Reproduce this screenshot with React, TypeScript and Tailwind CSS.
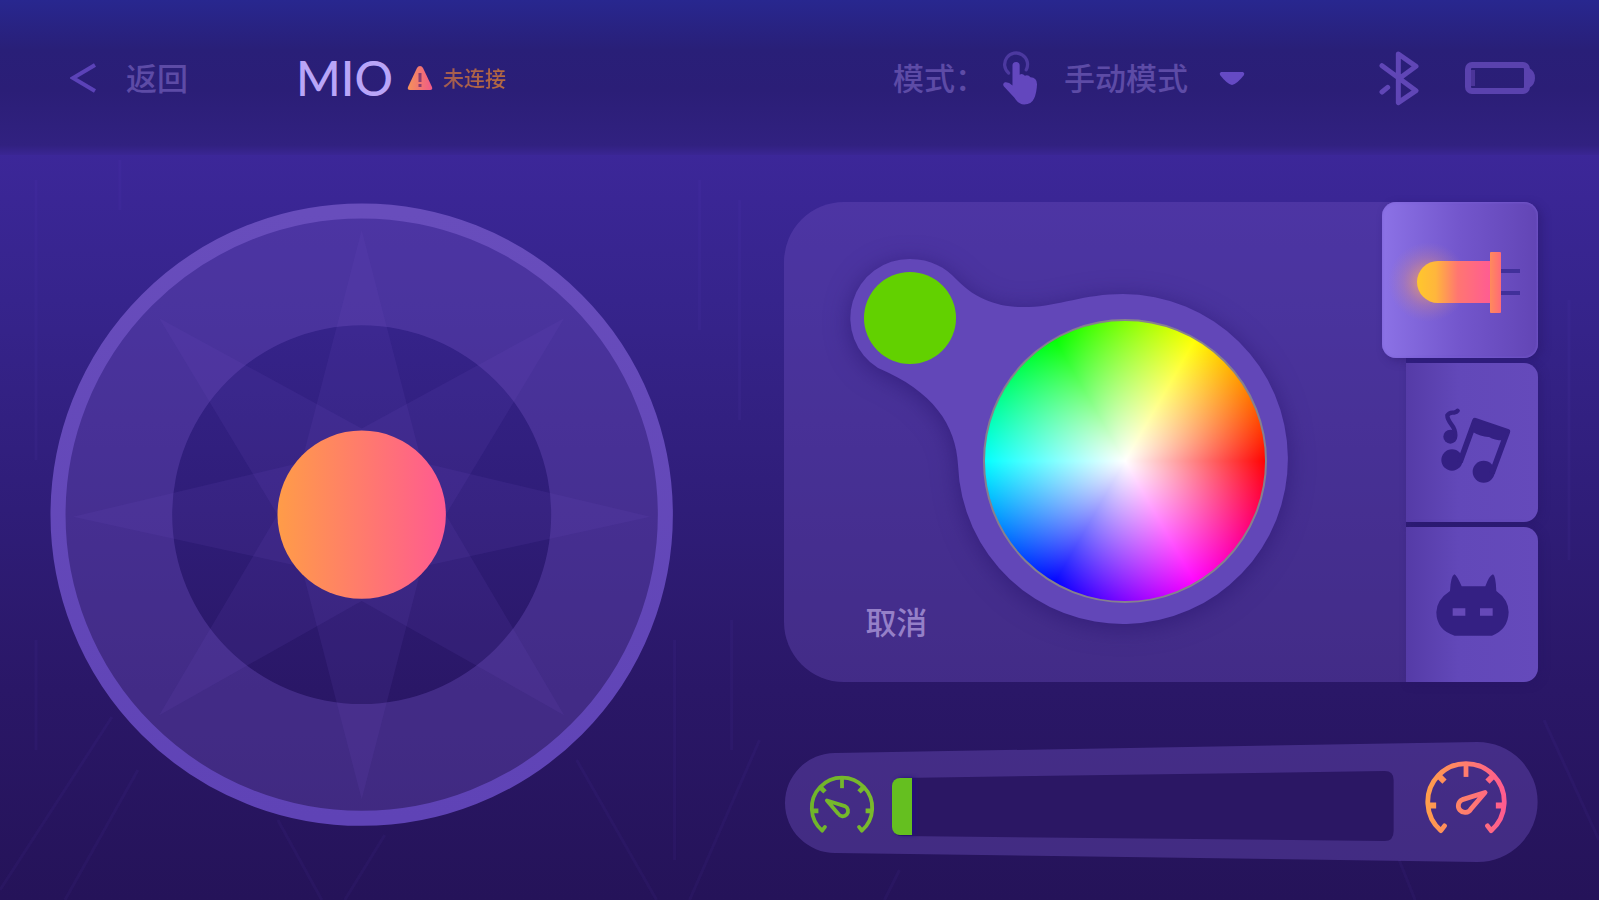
import React, { useState } from 'react';
import clsx from 'clsx';

type TabId = 'light' | 'music' | 'face';

const Backdrop = () => (
    <svg
        className="absolute inset-0 -z-10 w-full h-full"
        viewBox="0 0 1600 900"
        preserveAspectRatio="none"
        fill="none"
        stroke="#7a5ad6"
        strokeOpacity="0.06"
        strokeWidth="3"
        aria-hidden="true"
    >
        <path d="M112 717L0 890M138 770L65 900M278 820L322 900M577 760L657 900M385 835L345 900M760 740L690 900" />
        <path d="M675 640V860M732 620V750M36 640V750M1545 720L1600 840M1400 860L1416 900M900 870L885 900" />
        <path d="M36 180V460M120 160V210M740 200V420M700 180V330M1570 300V560" />
    </svg>
);

const HandIcon = () => (
    <svg className="w-[36px] h-[56px]" viewBox="400 52 110 170" aria-hidden="true">
        <path d="M420 122A35 35 0 1 1 474 112" fill="none" stroke="#4c39a0" strokeWidth="10" strokeLinecap="round" />
        <path
            d="M432 99a11 11 0 0 1 22 0V127Q462 122 470 130Q480 126 487 135Q507 136 507 156Q506 182 498 200Q490 218 468 218Q450 217 438 197L406 163Q400 154 409 150Q420 148 432 160Z"
            fill="#6347be"
        />
    </svg>
);

const BluetoothIcon = () => (
    <svg
        className="w-[40px] h-[56px]"
        viewBox="92 56 120 168"
        fill="none"
        stroke="#6046b6"
        strokeWidth="15"
        strokeLinecap="round"
        strokeLinejoin="round"
        aria-hidden="true"
    >
        <path d="M101 103L203 178L150 214V68L203 105L152 142" />
        <path d="M101 182L118 168" />
    </svg>
);

const BatteryIcon = () => (
    <svg className="w-[70px] h-[32px]" viewBox="0 0 70 32" fill="none" aria-hidden="true">
        <rect x="3" y="3" width="59" height="26" rx="4" stroke="#5a42ae" strokeWidth="6" />
        <path d="M64 6Q70 9 70 16T64 26Z" fill="#5a42ae" />
        <path d="M8 8V24" stroke="#4b3599" strokeWidth="4" />
    </svg>
);

const LedIcon = () => (
    <svg className="w-[156px] h-[156px]" viewBox="0 0 156 156" aria-hidden="true">
        <defs>
            <linearGradient id="ledBody" x1="0" x2="1">
                <stop offset="0" stopColor="#ffc72c" />
                <stop offset="0.25" stopColor="#ffb63c" />
                <stop offset="0.55" stopColor="#ff7671" />
                <stop offset="1" stopColor="#ff5b93" />
            </linearGradient>
            <linearGradient id="ledRim" x1="0" x2="1">
                <stop offset="0" stopColor="#ff8a5c" />
                <stop offset="1" stopColor="#ff6a78" />
            </linearGradient>
            <radialGradient id="ledGlow">
                <stop offset="0.2" stopColor="#f5a060" stopOpacity="0.7" />
                <stop offset="0.6" stopColor="#d98c80" stopOpacity="0.3" />
                <stop offset="1" stopColor="#b080a0" stopOpacity="0" />
            </radialGradient>
        </defs>
        <circle cx="46" cy="80" r="40" fill="url(#ledGlow)" />
        <path d="M119 69H138M119 91H138" stroke="#41309a" strokeWidth="4" />
        <path d="M109 59H56A21 21 0 0 0 56 101H109Z" fill="url(#ledBody)" />
        <rect x="108" y="50" width="11" height="61" rx="1" fill="url(#ledRim)" />
    </svg>
);

const MusicIcon = () => (
    <svg className="w-[72px] h-[78px]" viewBox="240 170 216 234" fill="#342083" stroke="#342083" aria-hidden="true">
        <circle cx="276" cy="332" r="32" stroke="none" />
        <circle cx="371" cy="367" r="33" stroke="none" />
        <path d="M300 338L345 214L442 247L396 372" fill="none" strokeWidth="17" strokeLinejoin="round" />
        <path d="M345 212L444 246L433 273Q405 274 387 263Q365 264 334 246Z" stroke="none" />
        <circle cx="271" cy="262" r="21" stroke="none" />
        <path d="M286 258Q286 240 274 225Q262 210 262 198Q268 188 282 190Q290 188 293 184" fill="none" strokeWidth="13" strokeLinecap="round" />
    </svg>
);

const CatIcon = () => (
    <svg className="w-[75px] h-[64px]" viewBox="225 670 225 192" aria-hidden="true">
        <path
            d="M283 674Q290 676 305 710H376Q388 677 399 674Q407 678 409 724Q446 750 446 788Q444 840 396 858H284Q230 842 229 788Q230 750 270 724Q272 680 283 674Z"
            fill="#342083"
        />
        <path d="M278 776H316V798H278ZM360 776H398V798H360Z" fill="#6649b8" />
    </svg>
);

interface GaugeIconProps {
    id: string;
    className: string;
    from: string;
    to: string;
    slow?: boolean;
}

const GaugeIcon: React.FC<GaugeIconProps> = ({ id, className, from, to, slow }) => (
    <svg className={className} viewBox="0 0 72 72" fill="none" aria-hidden="true">
        <defs>
            <linearGradient id={id} gradientUnits="userSpaceOnUse" x1="2" y1="0" x2="70" y2="0">
                <stop offset="0" stopColor={from} />
                <stop offset="1" stopColor={to} />
            </linearGradient>
        </defs>
        <g stroke={`url(#${id})`} strokeWidth="4" strokeLinejoin="round">
            <path d="M18 56L15 60A32 32 0 1 1 57 60L54 56" strokeLinecap="round" />
            <path d="M36 5V15" />
            <path d="M13 14L18 19M59 14L54 19M5 39H11M67 39H61" strokeWidth="5" />
            <path
                d="M52 28L33 34A5.6 5.6 0 1 0 40 42Z"
                transform={slow ? 'matrix(-1 0 0 1 72 0)' : undefined}
            />
        </g>
    </svg>
);

const Joystick = () => (
    <svg className="w-[42%] shrink-0" viewBox="-312 -312 624 624" role="img" aria-label="MIO">
        <defs>
            <linearGradient id="rim" x1="0" x2="0" y1="0" y2="1">
                <stop offset="0" stopColor="#684dbc" />
                <stop offset="1" stopColor="#5f43b6" />
            </linearGradient>
            <linearGradient id="knob" x1="0" x2="1">
                <stop offset="0" stopColor="#ff9c48" />
                <stop offset="1" stopColor="#ff5a91" />
            </linearGradient>
        </defs>
        <path
            fillRule="evenodd"
            d="M0-304A304 304 0 1 1 0 304A304 304 0 1 1 0-304ZM0-189A189 189 0 1 0 0 189A189 189 0 1 0 0-189Z"
            fill="#6e50be"
            fillOpacity="0.36"
        />
        <circle r="303" fill="none" stroke="url(#rim)" strokeWidth="15" />
        <g fill="#7452c8" fillOpacity="0.12">
            <path d="M0-284L60-52L288 2L60 52L0 284L-60 52L-288 2L-60-52Z" />
            <path d="M-202-196L0-86L202-196L84 0L202 200L0 86L-202 200L-84 0Z" />
        </g>
        <circle r="84" fill="url(#knob)" />
    </svg>
);

const ColorPicker = () => (
    <div className="relative w-[440px] h-[370px]">
        <svg className="absolute inset-0 w-full h-full overflow-visible drop-shadow-[0_4px_12px_rgba(40,20,110,0.6)]" viewBox="852 259 440 370" aria-hidden="true">
            <path
                d="M911 259C932 259 947 268 957 279C979 302 1004 308 1030 307C1060 306 1085 294 1124 294A165 165 0 1 1 959 465C957 425 934 391 879 368A59 59 0 0 1 911 259Z"
                fill="#6247b8"
            />
        </svg>
        <span className="absolute left-[13px] top-[13px] w-[92px] h-[92px] rounded-full bg-[#62d100]" />
        <button
            aria-label="颜色"
            className="absolute left-[132px] top-[60px] w-[284px] h-[284px] rounded-full border-2 border-[#86808f] bg-[radial-gradient(circle_closest-side,#fff,transparent),conic-gradient(from_90deg,#f00,#f0f,#00f,#0ff,#0f0,#ff0,#f00)] bg-origin-border"
        />
    </div>
);

const tabs: { id: TabId; label: string; icon: React.ReactNode }[] = [
    { id: 'light', label: '灯光', icon: <LedIcon /> },
    { id: 'music', label: '音乐', icon: <MusicIcon /> },
    { id: 'face', label: '表情', icon: <CatIcon /> },
];

const SpeedBar = () => {
    const [speed, setSpeed] = useState(4);

    return (
        <div className="relative flex items-center h-[120px] pl-[24px] pr-[29px]">
            <svg className="absolute inset-0 w-full h-full" viewBox="0 0 753 120" preserveAspectRatio="none" aria-hidden="true">
                <path d="M51 11L693 0A60 60 0 0 1 693 120L51 111A50 50 0 0 1 51 11Z" fill="#6e50be" fillOpacity="0.4" />
            </svg>
            <GaugeIcon id="gaugeSlow" className="relative w-[68px] h-[68px] shrink-0 mt-3" from="#6fb52a" to="#7aba2c" slow />
            <div className="relative flex-1 h-[72px] ml-4 mt-2">
                <svg className="w-full h-full" viewBox="0 0 503 72" preserveAspectRatio="none" aria-hidden="true">
                    <path d="M10 8L493 1Q502 1 502 10V61Q502 71 493 71L10 66Q1 66 1 56V18Q1 8 10 8Z" fill="#2b1764" />
                </svg>
                <span
                    className="absolute left-0 top-[8px] h-[57px] rounded-l-lg bg-[#65bf20] shadow-[3px_0_4px_#23107a]"
                    style={{ width: `${speed}%` }}
                />
                <input
                    type="range"
                    aria-label="速度"
                    min={4}
                    max={100}
                    value={speed}
                    onChange={e => setSpeed(Number(e.target.value))}
                    className="absolute inset-0 w-full h-full opacity-0 cursor-pointer"
                />
            </div>
            <GaugeIcon id="gaugeFast" className="relative w-[86px] h-[86px] shrink-0 ml-[28px]" from="#ff9f4a" to="#ff5a91" />
        </div>
    );
};

export default function App() {
    const [tab, setTab] = useState<TabId>('light');

    return (
        <div className="relative isolate min-h-screen flex flex-col overflow-hidden bg-[linear-gradient(to_bottom,#3c2799_150px,#36248c_300px,#2f1d78_510px,#2a1767_690px,#251359_900px)] font-['Lato','Noto_Sans_CJK_SC',sans-serif]">
            <Backdrop />
            <header className="flex items-center justify-between h-[155px] pl-[70px] pr-[64px] bg-[linear-gradient(to_bottom,#28278f_0px,#291f78_50px,#2b1e77_90px,#312180_145px,#3a2693_155px)]">
                <div className="flex items-center">
                    <button className="flex items-center gap-[30px] text-[31px] leading-10 font-medium text-[#5d4ba6]">
                        <svg className="w-[26px] h-[30px]" viewBox="0 0 26 30" fill="none" stroke="#5b42b8" strokeWidth="4" aria-hidden="true">
                            <path d="M25 2L3 15L25 28" />
                        </svg>
                        返回
                    </button>
                    <h1 className="ml-[108px] text-[48px] leading-[56px] font-medium text-[#b9a5f8]">MIO</h1>
                    <div className="flex items-center gap-[10px] ml-[14px] text-[21px] leading-8 font-medium">
                        <svg className="w-[26px] h-[25px]" viewBox="0 0 26 25" aria-hidden="true">
                            <defs>
                                <linearGradient id="warn" x1="0" x2="1">
                                    <stop offset="0" stopColor="#f5925a" />
                                    <stop offset="1" stopColor="#f05a88" />
                                </linearGradient>
                            </defs>
                            <path d="M13 1Q15 1 16 3L25 22Q26 25 23 25H3Q0 25 1 22L10 3Q11 1 13 1Z" fill="url(#warn)" />
                            <path d="M13 8V17M13 19V22" stroke="#8d3d70" strokeWidth="3" />
                        </svg>
                        <span className="bg-linear-to-r from-[#a35c50] to-[#b5693f] bg-clip-text text-transparent">未连接</span>
                    </div>
                </div>

                <div className="flex items-center text-[31px] leading-10 font-medium text-[#5d4ba6]">
                    <label htmlFor="mode">模式：</label>
                    <span className="ml-4">
                        <HandIcon />
                    </span>
                    <div className="relative ml-[26px]">
                        <select id="mode" className="w-[181px] appearance-none bg-transparent leading-10">
                            <option>手动模式</option>
                        </select>
                        <svg className="absolute right-0 top-[14px] w-[26px] h-[13px] pointer-events-none" viewBox="0 0 26 13" aria-hidden="true">
                            <path d="M2 0H24Q26 1 25 3Q18 12 13 13Q8 12 1 3Q0 1 2 0Z" fill="#654ac4" />
                        </svg>
                    </div>
                    <span className="ml-[134px]">
                        <BluetoothIcon />
                    </span>
                    <span className="ml-[46px]">
                        <BatteryIcon />
                    </span>
                </div>
            </header>

            <main className="flex flex-1 items-start gap-[110px] pt-[47px] pl-[49px] pr-[61px] pb-8">
                <Joystick />
                <div className="flex flex-col flex-1 gap-[60px]">
                    <div className="flex h-[480px]">
                        <section className="relative flex-1 rounded-l-[60px] bg-[#6e50be]/36 pl-[67px] pt-[57px]">
                            <ColorPicker />
                            <button className="absolute left-[81px] bottom-[40px] text-[31px] leading-10 font-medium text-[#9580c8]">取消</button>
                        </section>
                        <div role="tablist" className="relative flex flex-col gap-[5px] w-[132px]">
                            {tabs.map(item => (
                                <button
                                    key={item.id}
                                    role="tab"
                                    aria-label={item.label}
                                    aria-selected={tab === item.id}
                                    onClick={() => setTab(item.id)}
                                    className={clsx(
                                        'flex flex-1 items-center justify-center',
                                        item.id === 'music' && 'pl-2 pt-1',
                                        tab === item.id
                                            ? '-ml-6 rounded-[14px] bg-linear-to-r from-[#8c72e6] via-[#7356cc] to-[#6245b5] shadow-[0_0_3px_#7d62d6_inset,4px_3px_10px_rgba(38,20,100,0.4)]'
                                            : 'rounded-r-[14px] bg-linear-to-r from-[#553ba7] via-[#6248b9] via-40% to-[#654abb] shadow-[3px_2px_8px_rgba(38,20,100,0.35)]'
                                    )}
                                >
                                    {item.icon}
                                </button>
                            ))}
                        </div>
                    </div>
                    <SpeedBar />
                </div>
            </main>
        </div>
    );
}
